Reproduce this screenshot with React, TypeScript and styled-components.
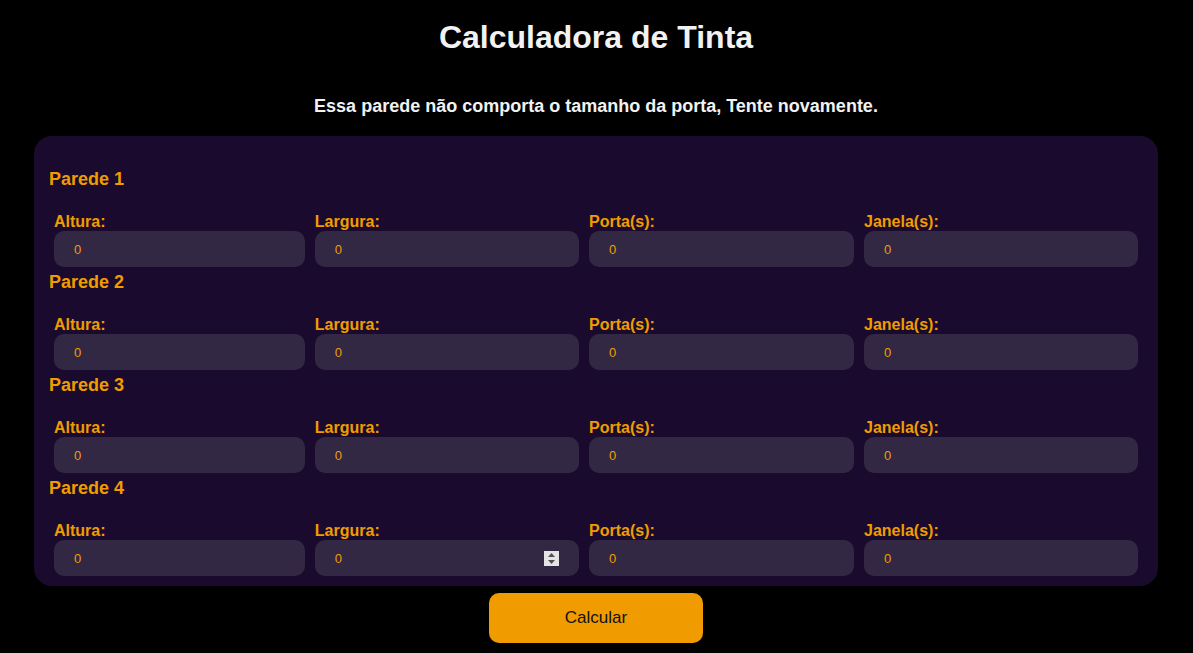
import React from "react";
import styled, { createGlobalStyle } from "styled-components";

const Global = createGlobalStyle`
  html, body { margin: 0; padding: 0; background: #000; }
  body { font-family: "Liberation Sans", Arial, sans-serif; }
  * { box-sizing: border-box; }
`;

const Page = styled.main`
  width: 1193px;
  min-height: 653px;
  display: flex;
  flex-direction: column;
  align-items: center;
  padding: 0 35px 0 34px;
`;

const Title = styled.h1`
  margin: 19px 0 0;
  font-size: 32px;
  line-height: 37px;
  font-weight: 700;
  color: #f2f2f2;
`;

const Message = styled.p`
  margin: 40px 0 0;
  font-size: 18px;
  line-height: 21px;
  font-weight: 700;
  color: #f2f2f2;
`;

const Panel = styled.section`
  align-self: stretch;
  margin-top: 19px;
  background: #1a0b2e;
  border-radius: 18px;
  padding: 28px 15px 10px;
  display: flex;
  flex-direction: column;
`;

const Wall = styled.div`
  display: flex;
  flex-direction: column;
`;

const WallTitle = styled.h3`
  margin: 5px 0 0;
  font-size: 18px;
  line-height: 21px;
  font-weight: 700;
  color: #f09c00;
`;

const Row = styled.div`
  display: flex;
  gap: 10px;
  margin: 22px 5px 0;
`;

const Field = styled.label`
  flex: 1 1 auto;
  display: flex;
  flex-direction: column;
  position: relative;
`;

const FieldName = styled.span`
  font-size: 16px;
  line-height: 19px;
  font-weight: 700;
  color: #f09c00;
  white-space: nowrap;
`;

const Input = styled.input`
  width: 0;
  min-width: 100%;
  height: 36px;
  border: none;
  outline: none;
  border-radius: 10px;
  background: #322843;
  color: #f09c00;
  font-family: "Liberation Sans", Arial, sans-serif;
  font-size: 13px;
  padding: 0 20px;
  &::-webkit-inner-spin-button,
  &::-webkit-outer-spin-button {
    -webkit-appearance: none;
    margin: 0;
  }
  -moz-appearance: textfield;
`;

const Spinner = styled.span`
  position: absolute;
  right: 20px;
  bottom: 10px;
  width: 15px;
  height: 15px;
  background: #e4e4e4;
  display: flex;
  align-items: center;
  justify-content: center;
  pointer-events: none;
`;

const Button = styled.button`
  margin-top: 7px;
  width: 214px;
  height: 50px;
  border: none;
  border-radius: 10px;
  background: #f09c00;
  color: #111;
  font-family: "Liberation Sans", Arial, sans-serif;
  font-size: 17px;
  cursor: pointer;
`;

const fields = ["Altura:", "Largura:", "Porta(s):", "Janela(s):"];

export default function App() {
  return (
    <>
      <Global />
      <Page>
        <Title>Calculadora de Tinta</Title>
        <Message>Essa parede não comporta o tamanho da porta, Tente novamente.</Message>
        <Panel>
          {[1, 2, 3, 4].map((w) => (
            <Wall key={w}>
              <WallTitle>Parede {w}</WallTitle>
              <Row>
                {fields.map((f, i) => (
                  <Field key={f}>
                    <FieldName>{f}</FieldName>
                    <Input type="number" defaultValue={0} />
                    {w === 4 && i === 1 && (
                      <Spinner>
                        <svg width="11" height="13" viewBox="0 0 11 13">
                          <path d="M5.5 1 L9 5 L2 5 Z" fill="#505050" />
                          <path d="M2 8 L9 8 L5.5 12 Z" fill="#505050" />
                        </svg>
                      </Spinner>
                    )}
                  </Field>
                ))}
              </Row>
            </Wall>
          ))}
        </Panel>
        <Button>Calcular</Button>
      </Page>
    </>
  );
}
